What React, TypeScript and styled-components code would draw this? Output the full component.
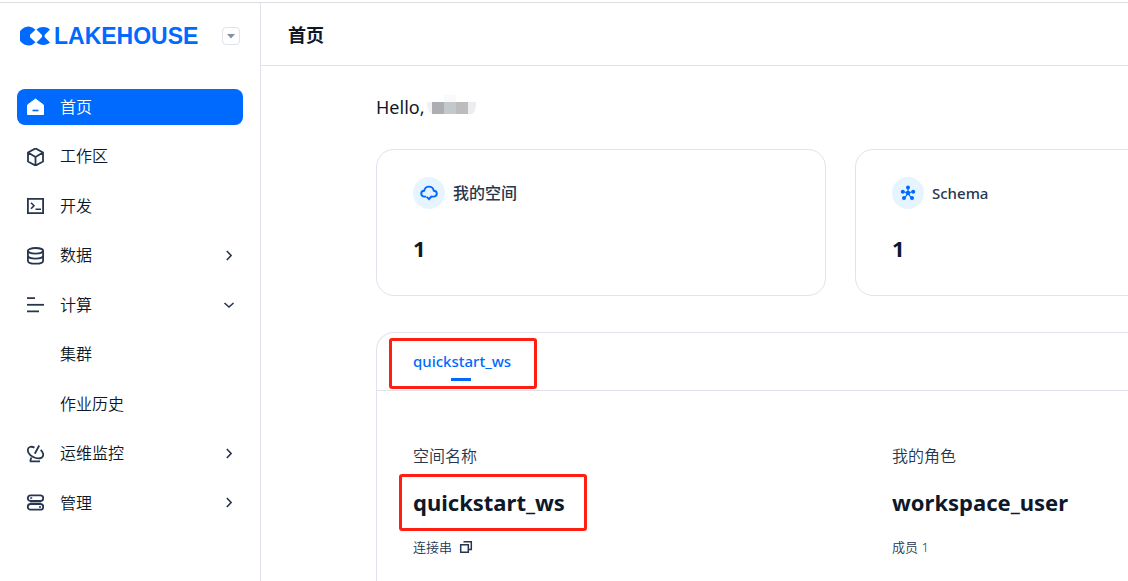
import React from "react";
import styled, { createGlobalStyle } from "styled-components";

const latin = `"Noto Sans", "Noto Sans CJK SC", sans-serif`;
const blue = "#006aff";
const ink = "#26364f";
const line = "#e1e2ec";

const GlobalStyle = createGlobalStyle`
  * { box-sizing: border-box; }
  body {
    margin: 0;
    background: #fff;
    color: #0d1828;
    font-family: ${latin};
    font-size: 16px;
    line-height: 24px;
    overflow-x: hidden;
  }
  button { font: inherit; color: inherit; border: 0; background: none; padding: 0; cursor: pointer; }
  h1, h2, p, ul { margin: 0; padding: 0; }
  svg { display: block; flex: none; }
`;

const Page = styled.div`
  display: flex;
  min-height: calc(100vh - 2px);
  margin-top: 2px;
  border-top: 1px solid #dcdde0;
  overflow: hidden;
`;

const Sidebar = styled.aside`
  flex: none;
  width: 261px;
  border-right: 1px solid ${line};
  padding: 0 17px;
`;

const Brand = styled.div`
  display: flex;
  align-items: center;
  height: 66px;
  padding: 0 3px;
  margin-bottom: 20px;
`;

const BrandName = styled.span`
  font-family: "Liberation Sans", Arial, sans-serif;
  font-weight: 700;
  font-size: 23px;
  line-height: 24px;
  color: ${blue};
  margin-left: 3px;
`;

const Switcher = styled.button`
  display: flex;
  align-items: center;
  justify-content: center;
  width: 18px;
  height: 18px;
  margin-left: auto;
  border: 1px solid #dfe3ec;
  border-radius: 4px;
`;

const Menu = styled.ul`
  display: flex;
  flex-direction: column;
  justify-content: space-between;
  height: 432px;
  list-style: none;
`;

const MenuLink = styled.a<{ $active?: boolean; $child?: boolean }>`
  display: flex;
  align-items: center;
  gap: 16px;
  height: 36px;
  padding: 0 8px 0 ${(p) => (p.$child ? 43 : 9)}px;
  border-radius: 8px;
  text-decoration: none;
  color: ${(p) => (p.$active ? "#fff" : "#0d1828")};
  background: ${(p) => (p.$active ? blue : "transparent")};
  svg { color: ${(p) => (p.$active ? "#fff" : ink)}; }
`;

const MenuText = styled.span`
  flex: 1;
  padding-bottom: 1px;
  font-weight: 350;
`;

const Main = styled.main`
  display: flex;
  flex-direction: column;
  flex: 1;
  min-width: 0;
`;

const Header = styled.header`
  display: flex;
  align-items: center;
  height: 63px;
  padding: 2px 27px 0;
  border-bottom: 1px solid ${line};
`;

const Title = styled.h1`
  font-size: 18px;
  line-height: 24px;
  font-weight: 700;
`;

const Content = styled.div`
  display: flex;
  flex-direction: column;
  flex: 1;
  padding: 29px 115px 0;
`;

const Hello = styled.p`
  display: flex;
  align-items: center;
  gap: 2px;
  font-size: 18px;
  margin-bottom: 30px;
`;

const Columns = styled.div`
  display: grid;
  grid-template-columns: repeat(2, minmax(450px, 1fr));
  column-gap: 29px;
`;

const Card = styled.section`
  height: 147px;
  padding: 27px 36px;
  border: 1px solid ${line};
  border-radius: 18px;
`;

const CardHead = styled.div`
  display: flex;
  align-items: center;
  gap: 8px;
  height: 32px;
`;

const Bubble = styled.span`
  display: flex;
  align-items: center;
  justify-content: center;
  width: 32px;
  height: 32px;
  border-radius: 50%;
  background: #e6f4ff;
  color: ${blue};
`;

const CardName = styled.h2<{ $latin?: boolean }>`
  font-size: ${(p) => (p.$latin ? 15 : 16)}px;
  line-height: 24px;
  font-weight: 500;
  color: ${ink};
`;

const Count = styled.p`
  margin-top: 23px;
  font-size: 22px;
  line-height: 32px;
  font-weight: 700;
`;

const Panel = styled.section`
  flex: 1;
  margin-top: 36px;
  min-width: 929px;
  border: 1px solid ${line};
  border-bottom: 0;
  border-radius: 18px 18px 0 0;
`;

const Tabs = styled.div`
  display: flex;
  height: 58px;
  padding: 0 36px;
  border-bottom: 1px solid ${line};
`;

const Tab = styled.button`
  position: relative;
  padding-bottom: 2px;
  color: ${blue};
  font-size: 15px;
  font-weight: 500;
  &::after {
    content: "";
    position: absolute;
    left: 50%;
    bottom: 9px;
    width: 20px;
    height: 3px;
    margin-left: -11px;
    background: ${blue};
  }
`;

const Mark = styled.span<{ $inset: string }>`
  position: absolute;
  inset: ${(p) => p.$inset};
  border: 3px solid #ff1f12;
  border-radius: 3px;
  pointer-events: none;
`;

const Facts = styled(Columns)`
  padding: 53px 0 0 36px;
`;

const Label = styled.p`
  font-weight: 350;
  color: ${ink};
`;

const Value = styled.p`
  position: relative;
  width: max-content;
  margin: 18px 0 19px;
  font-size: 22px;
  line-height: 32px;
  font-weight: 700;
`;

const Note = styled.div`
  display: flex;
  align-items: center;
  gap: 7px;
  padding-bottom: 20px;
  font-size: 13px;
  line-height: 20px;
  font-weight: 350;
  color: ${ink};
`;

type IconProps = { children: React.ReactNode; size?: number };
const Icon = ({ children, size = 18 }: IconProps) => (
  <svg width={size} height={size} viewBox={`0 0 ${size} ${size}`} fill="none" stroke="currentColor" strokeWidth="1.8" aria-hidden="true">
    {children}
  </svg>
);

const HomeIcon = () => (
  <Icon>
    <path d="M9.500 1 17.500 7V16.500H1.500V7Z" fill="currentColor" stroke="currentColor" strokeWidth="1" strokeLinejoin="round" />
    <path d="M6.500 12.500h6" stroke={blue} strokeWidth="1.600" />
  </Icon>
);
const CubeIcon = () => (
  <Icon>
    <path d="M9.500 .4 17 4.500v9L9.500 17.600 2 13.500v-9ZM2 4.500l7.500 4.500L17 4.500M9.500 9v8.600" strokeWidth="1.800" />
  </Icon>
);
const TerminalIcon = () => (
  <Icon>
    <path d="M1.900 1.800h15.200v14.400H1.900Z" strokeWidth="1.800" />
    <path d="m5 5.800 3 3-3 3M9.500 12.200h5.500" strokeWidth="1.600" />
  </Icon>
);
const DatabaseIcon = () => (
  <Icon>
    <ellipse cx="9.500" cy="3.800" rx="7.600" ry="2.800" strokeWidth="1.800" />
    <path d="M1.900 3.800v9.900c0 4 15.200 4 15.200 0V3.800M1.900 8.800c.8 3.800 14.400 3.800 15.200 0" strokeWidth="1.800" />
  </Icon>
);
const BarsIcon = () => (
  <Icon>
    <path d="M1 2.200h8M1 15.300h12" strokeWidth="1.700" />
    <path d="M1 8.800h17" />
  </Icon>
);
const DishIcon = () => (
  <Icon>
    <path d="M8.500 2.600C5 .8 1.800 2 1.800 5c0 5.200 8.700 10.300 13.800 7.600 2.600-1.500 2-4.900-.9-7.800M8.800 8.700l4.400-8.200M5.300 12.500 4.200 16M3.800 16.300H14" strokeWidth="1.800" />
  </Icon>
);
const ServersIcon = () => (
  <Icon>
    <rect x="1.800" y="1.300" width="15.400" height="5.700" rx="2.800" strokeWidth="1.800" />
    <rect x="1.800" y="10" width="15.400" height="5.700" rx="2.800" strokeWidth="1.800" />
    <path d="M4.200 4.100h2M13 12.900h2" strokeWidth="1.500" />
    <path d="M4 8.500h11" strokeWidth="1" opacity=".4" />
  </Icon>
);
const Chevron = ({ open }: { open?: boolean }) => (
  <Icon size={12}>
    <path d={open ? "m1.500 4 4.500 4 4.500-4" : "m3.800 1 4.300 4.500-4.300 4.500"} strokeWidth="1.600" />
  </Icon>
);
const CloudIcon = () => (
  <Icon>
    <path d="M6.200 12.600H4.600C.2 12.600.2 6.900 4.200 6.700 5.300 1.200 12.700 1.200 13.800 6.700c4 .2 4 5.900-.4 5.900h-1.600M6.700 12.900 9 15.200l2.800-3.200" strokeWidth="1.900" />
  </Icon>
);
const SchemaIcon = () => (
  <Icon>
    <path d="M9 9V3M9 9 3.500 7.500M9 9l5.500-1.500M9 9l-3.500 5.500M9 9l3.500 5.500" strokeWidth="1.200" />
    <g fill="currentColor" stroke="none">
      <circle cx="9" cy="9" r="2.300" />
      <circle cx="9" cy="3.500" r="2" />
      <circle cx="3.800" cy="7.800" r="2" />
      <circle cx="14.200" cy="7.800" r="2" />
      <circle cx="5" cy="14" r="2" />
      <circle cx="13" cy="14" r="2" />
    </g>
  </Icon>
);
const CopyIcon = () => (
  <Icon size={14}>
    <path d="M1.700 4.700h7.600v7.600H1.700ZM4.500 1.700h7.800v7.800h-3" strokeWidth="1.500" />
  </Icon>
);
const Logo = () => (
  <svg width="31" height="20" viewBox="0 0 31 20" fill={blue} aria-hidden="true">
    <path d="M15.500 3.700A9.500 9.500 0 1 0 15.500 16.300L10 11.200V8.800Z" />
    <path d="M16.500 3.500C20 .2 26.500 .2 30 3.500L24.600 9v2L30 16.500C26.500 19.800 20 19.800 16.500 16.500L22 11V9Z" />
  </svg>
);
const MaskedName = () => (
  <svg width="50" height="24" viewBox="0 0 50 24" role="img" aria-label="hidden">
    <path d="M0 7h5v12C1 17 0 12 0 7Z" fill="#f3f1f2" />
    <path d="M17 0h12v7H17Z" fill="#f9f9fa" />
    <path d="M5 7h12v12H5Z" fill="#adadb2" />
    <path d="M17 7h12v12H17Z" fill="#c3c8cc" />
    <path d="M29 7h12v12H29Z" fill="#bcbcbe" />
    <path d="M41 7h8c0 6-1 10-4 12h-4Z" fill="#ededf0" />
  </svg>
);

type Item = { text: string; icon?: React.ReactNode; active?: boolean; arrow?: "right" | "down" };
const items: Item[] = [
  { text: "首页", icon: <HomeIcon />, active: true },
  { text: "工作区", icon: <CubeIcon /> },
  { text: "开发", icon: <TerminalIcon /> },
  { text: "数据", icon: <DatabaseIcon />, arrow: "right" },
  { text: "计算", icon: <BarsIcon />, arrow: "down" },
  { text: "集群" },
  { text: "作业历史" },
  { text: "运维监控", icon: <DishIcon />, arrow: "right" },
  { text: "管理", icon: <ServersIcon />, arrow: "right" },
];

export default function App() {
  return (
    <>
      <GlobalStyle />
      <Page>
        <Sidebar>
          <Brand>
            <Logo />
            <BrandName>LAKEHOUSE</BrandName>
            <Switcher aria-label="Switch product">
              <svg width="10" height="5" viewBox="0 0 10 5" fill="#8490a3"><path d="M1 0h8L5 4.500Z" /></svg>
            </Switcher>
          </Brand>
          <nav>
            <Menu>
              {items.map((item) => (
                <li key={item.text}>
                  <MenuLink href="#" $active={item.active} $child={!item.icon}>
                    {item.icon}
                    <MenuText>{item.text}</MenuText>
                    {item.arrow && <Chevron open={item.arrow === "down"} />}
                  </MenuLink>
                </li>
              ))}
            </Menu>
          </nav>
        </Sidebar>
        <Main>
          <Header><Title>首页</Title></Header>
          <Content>
            <Hello>Hello, <MaskedName /></Hello>
            <Columns>
              <Card>
                <CardHead><Bubble><CloudIcon /></Bubble><CardName>我的空间</CardName></CardHead>
                <Count>1</Count>
              </Card>
              <Card>
                <CardHead><Bubble><SchemaIcon /></Bubble><CardName $latin>Schema</CardName></CardHead>
                <Count>1</Count>
              </Card>
            </Columns>
            <Panel>
              <Tabs role="tablist">
                <Tab role="tab" aria-selected="true">quickstart_ws<Mark $inset="5px -26px 1px -24px" /></Tab>
              </Tabs>
              <Facts>
                <div>
                  <Label>空间名称</Label>
                  <Value>quickstart_ws<Mark $inset="-12px -22px -13px -14px" /></Value>
                  <Note>连接串 <button aria-label="Copy"><CopyIcon /></button></Note>
                </div>
                <div>
                  <Label>我的角色</Label>
                  <Value>workspace_user</Value>
                  <Note>成员 1</Note>
                </div>
              </Facts>
            </Panel>
          </Content>
        </Main>
      </Page>
    </>
  );
}
